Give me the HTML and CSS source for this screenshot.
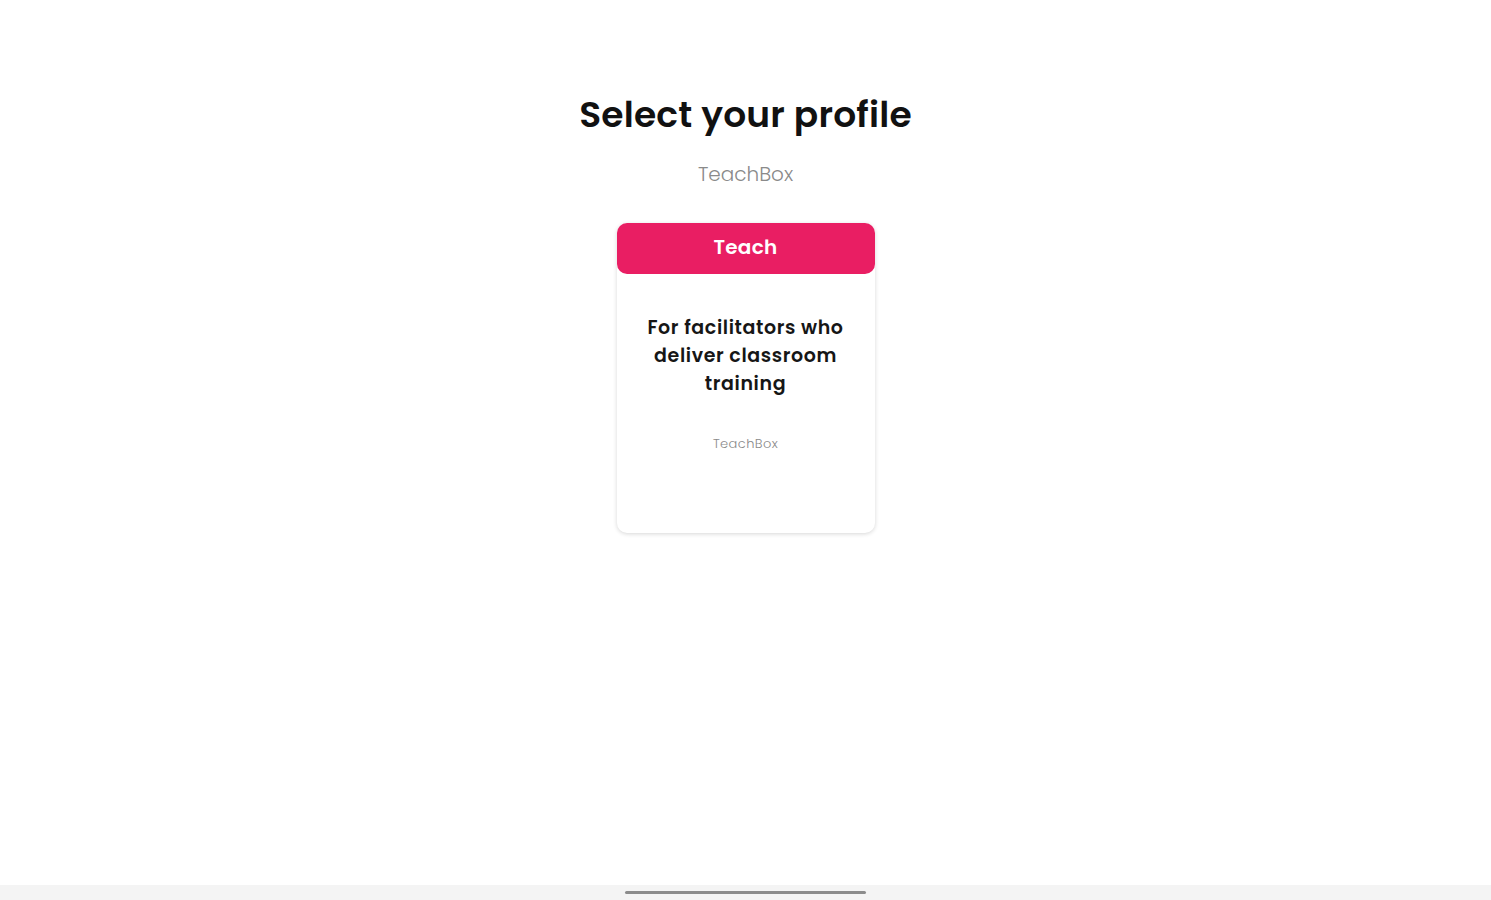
FILE: index.html
```html
<!DOCTYPE html>
<html lang="en">
<head>
    <meta charset="UTF-8">
    <meta name="viewport" content="width=device-width, initial-scale=1.0">
    <title>Select your profile</title>
    <link rel="stylesheet" href="styles.css">
</head>
<body>
    <main class="page">
        <h1 class="title">Select your profile</h1>
        <p class="subtitle">TeachBox</p>

        <div class="profile-card">
            <div class="profile-header">Teach</div>
            <div class="profile-body">
                <p class="profile-desc">For facilitators who deliver classroom training</p>
                <p class="profile-brand">TeachBox</p>
            </div>
        </div>
    </main>

    <div class="nav-bar">
        <span class="nav-handle"></span>
    </div>
</body>
</html>
```

FILE: styles.css
```css
/* reset */
* {
    margin: 0;
    padding: 0;
    box-sizing: border-box;
    font-family: 'Poppins', 'Inter', 'Noto Sans', sans-serif;
}

body {
    background: #ffffff;
    min-height: 100vh;
    display: flex;
    flex-direction: column;
}

.page {
    flex: 1;
    display: flex;
    flex-direction: column;
    align-items: center;
    padding-top: 93px;
}

.title {
    font-size: 36px;
    line-height: 43px;
    font-weight: 600;
    color: #111111;
    letter-spacing: 0.2px;
}

.subtitle {
    margin-top: 25px;
    font-size: 20px;
    line-height: 26px;
    font-weight: 300;
    color: #8a8a8a;
}

.profile-card {
    margin-top: 36px;
    width: 258px;
    height: 310px;
    background: #ffffff;
    border-radius: 10px;
    box-shadow: 0 1px 4px rgba(0, 0, 0, 0.16);
}

.profile-header {
    height: 51px;
    background: #e91e63;
    border-radius: 10px;
    color: #ffffff;
    font-size: 20px;
    font-weight: 600;
    letter-spacing: 0.3px;
    display: flex;
    align-items: center;
    justify-content: center;
    padding-bottom: 3px;
}

.profile-body {
    padding: 40px 20px 0;
    text-align: center;
}

.profile-desc {
    font-size: 19px;
    line-height: 28px;
    font-weight: 600;
    letter-spacing: 0.6px;
    color: #161616;
}

.profile-brand {
    margin-top: 37px;
    font-size: 13px;
    line-height: 18px;
    font-weight: 300;
    letter-spacing: 0.4px;
    color: #8a8a8a;
}

.nav-bar {
    height: 15px;
    background: #f4f4f4;
    display: flex;
    justify-content: center;
    padding-top: 6px;
}

.nav-handle {
    width: 241px;
    height: 3px;
    border-radius: 2px;
    background: #8c8c8c;
}
```
